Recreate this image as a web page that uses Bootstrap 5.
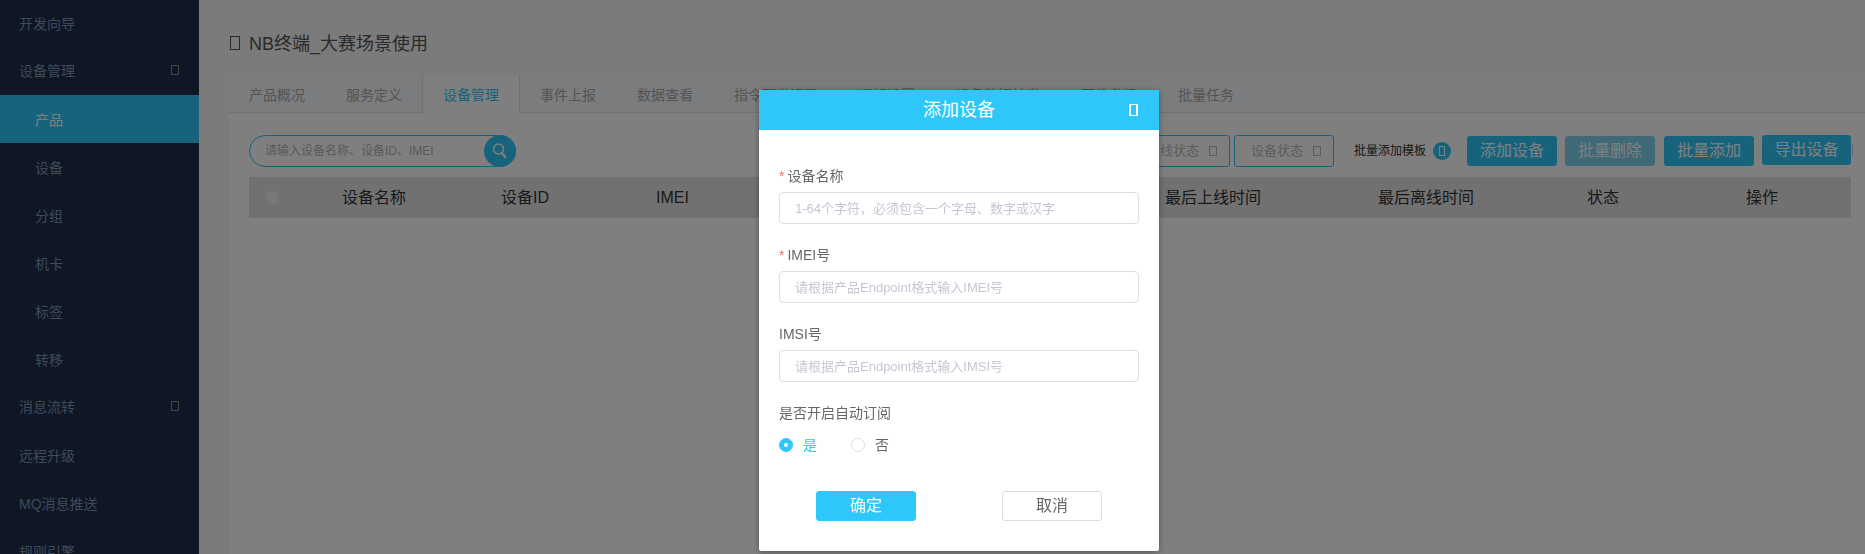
<!DOCTYPE html>
<html lang="zh">
<head>
<meta charset="utf-8">
<title>添加设备</title>
<link rel="stylesheet" href="https://cdn.jsdelivr.net/npm/bootstrap@5.3.0/dist/css/bootstrap.min.css">
<style>
html,body{height:554px;overflow:hidden}
body{font-family:"Liberation Sans","Noto Sans CJK SC",sans-serif;background:#f6f6f6;font-size:14px;color:#666}
.tofu{display:inline-block;border:1px solid currentColor;width:8px;height:10px;flex:none}
.shell{height:554px}
.side{width:199px;flex:none;background:#1e2e4a;overflow:hidden;height:554px}
.side-item{height:48px;line-height:50px;padding:0 20px 0 19px;color:#7c92b4;font-size:14px;flex:none}
.side-item:first-child{height:47px;line-height:49px}
.side-item.sub{padding-left:35px}
.side-item.on{background:#2ec7f9;color:#fff}
.side-item .tofu{color:#8a8a8a;width:8px;height:10px;margin-top:-3px}
.work{flex:1;min-width:0;padding-left:30px;overflow:hidden}
.page-title{height:75px;padding-top:36px;padding-left:1px;font-size:18px;line-height:17px;color:#555;gap:9px}
.page-title .tofu{width:10px;height:14px}
.tabs-strip{height:38px;flex-wrap:nowrap;background:#f6f8fc;border-bottom:1px solid #dfe1e6}
.tab-link{display:block;height:38px;line-height:40px;padding:0 20px;border-right:1px solid transparent;color:#a8a8a8;white-space:nowrap;font-size:14px;box-sizing:content-box;text-decoration:none}
.tab-link.on{color:#2ec7f9;background:#fff;border-left:1px solid #dfe1e6;border-right:1px solid #dfe1e6;margin-left:-1px}
.panel-area{background:#fff;padding:22px 14px 0 20px;height:441px}
.bar{height:32px;margin-bottom:10px}
.searcher{width:267px;height:32px;border:1px solid #2ec7f9;border-radius:16px;padding-left:15px;font-size:12px;color:#b5b5b5;line-height:30px}
.search-go{position:absolute;right:-1px;top:-1px;width:32px;height:32px;border-radius:50%;background:#2ec7f9}
.picker{height:32px;width:100px;border:1px solid #2ec7f9;border-radius:3px;font-size:13px;color:#bbb;padding-right:12px;gap:10px}
.picker.first{width:96px}
.tmpl{font-size:12px;color:#333;gap:7px}
.tmpl-dot{width:18px;height:18px;border-radius:50%;background:#2ec7f9;color:#fff}
.tmpl-dot .tofu{width:6px;height:10px}
.act{width:90px;height:30px;padding:0;font-size:16px;line-height:30px;border:0;border-radius:3px;background:#2ec7f9;color:#fff}
.act.off{background:#7fd3ee;color:#fff;opacity:1}
.act.shifted{margin-left:1px}
.act.raised{position:relative;top:-1px;width:89px}
.act.raised::after{content:"";position:absolute;right:-2px;top:10px;width:1px;height:10px;background:#b8c4ca}
.head-table{height:41px;width:100%;table-layout:fixed;background:#e2e2e2;color:#333;font-size:16px}
.head-table th{font-weight:400;padding:0;vertical-align:middle}
.c0{width:93px}.c1{width:159px}.c2{width:155px}.c3{width:509px}.c4{width:213px}.c5{width:209px}.c6{width:159px}
.tick{display:block;width:13px;height:13px;margin-left:17px;background:#f0f0f5;border:1px solid #e4e4ea;border-radius:2px}
.dimmer{position:fixed;inset:0;background:rgba(0,0,0,.5);z-index:10}
.dialog-box{position:fixed;left:759px;top:90px;width:400px;height:461px;background:#fff;border-radius:2px;box-shadow:0 1px 6px rgba(0,0,0,.35);z-index:11}
.dialog-top{height:40px;background:#2ec7f9;color:#fff;font-size:18px;position:relative}
.dialog-top .tofu{position:absolute;left:370px;top:14px;width:9px;height:12px;border-width:1px 2px;border-color:#fff}
.dialog-body{padding:36px 20px 0}
.fld{margin-bottom:21px}
.fld-label{display:block;height:20px;line-height:20px;margin:0 0 6px;color:#666;font-size:14px}
.star{color:#f56c6c;font-size:14px;margin-right:3px}
.fld-input{height:32px;padding:0 15px;font-size:13px;border:1px solid #dcdfe6;border-radius:4px}
.fld-input::placeholder{color:#c5c8d3;opacity:1}
.choice{height:20px;margin-top:12px;font-size:14px}
.choice-item{width:72px;gap:10px}
.dot{width:14px;height:14px;border-radius:50%;border:1px solid #dcdfe6;background:#fff;flex:none}
.dot.on{background:#2ec7f9;border-color:#2ec7f9}
.dot.on::after{content:"";width:4px;height:4px;border-radius:50%;background:#fff}
.txt-on{color:#2ec7f9}
.foot-row{margin-top:36px;padding-left:37px;gap:86px}
.ok,.no{width:100px;height:30px;padding:0;font-size:16px;line-height:28px;border-radius:3px}
.ok{background:#2ec7f9;border:1px solid #2ec7f9;color:#fff}
.no{background:#fff;border:1px solid #dcdfe6;color:#666}
</style>
</head>
<body>
<div class="shell d-flex">
  <nav class="side d-flex flex-column">
    <div class="side-item">开发向导</div>
    <div class="side-item d-flex justify-content-between align-items-center"><span>设备管理</span><span class="tofu"></span></div>
    <div class="side-item sub on">产品</div>
    <div class="side-item sub">设备</div>
    <div class="side-item sub">分组</div>
    <div class="side-item sub">机卡</div>
    <div class="side-item sub">标签</div>
    <div class="side-item sub">转移</div>
    <div class="side-item d-flex justify-content-between align-items-center"><span>消息流转</span><span class="tofu"></span></div>
    <div class="side-item">远程升级</div>
    <div class="side-item">MQ消息推送</div>
    <div class="side-item">规则引擎</div>
  </nav>
  <main class="work">
    <div class="page-title d-flex align-items-start"><span class="tofu"></span><span>NB终端_大赛场景使用</span></div>
    <div class="tabs-strip d-flex">
      <a class="tab-link">产品概况</a>
      <a class="tab-link">服务定义</a>
      <a class="tab-link on">设备管理</a>
      <a class="tab-link">事件上报</a>
      <a class="tab-link">数据查看</a>
      <a class="tab-link">指令下发记录</a>
      <a class="tab-link">通知设置</a>
      <a class="tab-link">设备数据转发</a>
      <a class="tab-link">固件升级</a>
      <a class="tab-link">批量任务</a>
    </div>
    <section class="panel-area">
      <div class="bar d-flex align-items-center justify-content-between">
        <div class="searcher position-relative">请输入设备名称、设备ID、IMEI
          <span class="search-go d-flex align-items-center justify-content-center">
            <svg width="18" height="18" viewBox="0 0 18 18" fill="none" stroke="#fff"><circle cx="7.5" cy="7" r="5" stroke-width="1.5"/><path d="M11 11 14.5 15.5" stroke-width="2.2" stroke-linecap="round"/></svg>
          </span>
        </div>
        <div class="d-flex align-items-center">
          <div class="picker first d-flex align-items-center justify-content-end me-1"><span>在线状态</span><span class="tofu"></span></div>
          <div class="picker d-flex align-items-center justify-content-end"><span>设备状态</span><span class="tofu"></span></div>
          <div class="tmpl d-flex align-items-center ms-3 me-3 ps-1"><span>批量添加模板</span><span class="tmpl-dot d-flex align-items-center justify-content-center"><span class="tofu"></span></span></div>
          <div class="d-flex align-items-center gap-2">
            <button type="button" class="btn act">添加设备</button>
            <button type="button" class="btn act off">批量删除</button>
            <button type="button" class="btn act shifted">批量添加</button>
            <button type="button" class="btn act raised">导出设备</button>
          </div>
        </div>
      </div>
      <table class="head-table">
        <colgroup><col class="c0"><col class="c1"><col class="c2"><col class="c3"><col class="c4"><col class="c5"><col class="c6"><col></colgroup>
        <thead><tr>
          <th><span class="tick"></span></th><th>设备名称</th><th>设备ID</th><th>IMEI</th><th>最后上线时间</th><th>最后离线时间</th><th>状态</th><th>操作</th>
        </tr></thead>
      </table>
    </section>
  </main>
</div>
<div class="dimmer"></div>
<div class="dialog-box" role="dialog">
  <div class="dialog-top d-flex align-items-center justify-content-center">添加设备<span class="tofu"></span></div>
  <form class="dialog-body">
    <div class="fld"><label class="fld-label"><span class="star">*</span>设备名称</label><input class="form-control fld-input" placeholder="1-64个字符，必须包含一个字母、数字或汉字"></div>
    <div class="fld"><label class="fld-label"><span class="star">*</span>IMEI号</label><input class="form-control fld-input" placeholder="请根据产品Endpoint格式输入IMEI号"></div>
    <div class="fld"><label class="fld-label">IMSI号</label><input class="form-control fld-input" placeholder="请根据产品Endpoint格式输入IMSI号"></div>
    <div class="fld-label mb-0">是否开启自动订阅</div>
    <div class="choice d-flex align-items-center">
      <div class="choice-item d-flex align-items-center"><span class="dot on d-flex align-items-center justify-content-center"></span><span class="txt-on">是</span></div>
      <div class="choice-item d-flex align-items-center"><span class="dot"></span><span>否</span></div>
    </div>
    <div class="foot-row d-flex">
      <button type="button" class="btn ok">确定</button>
      <button type="button" class="btn no">取消</button>
    </div>
  </form>
</div>
</body>
</html>
